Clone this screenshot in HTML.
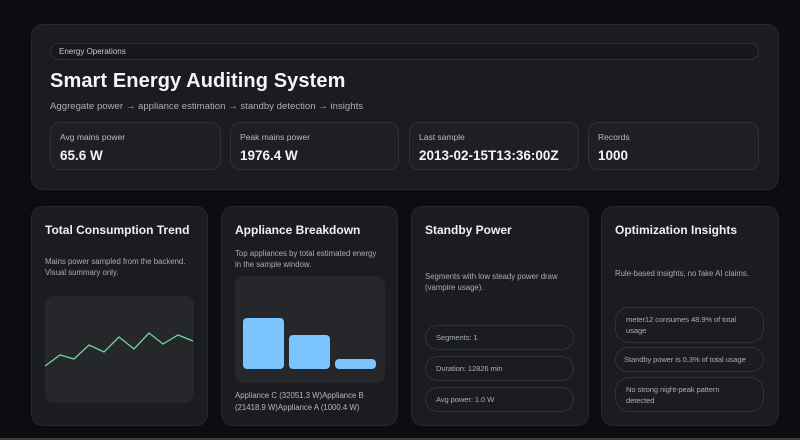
<!DOCTYPE html><html><head><style>
*{box-sizing:border-box;margin:0;padding:0}
body{width:800px;height:440px;background:#0b0d11;font-family:"Liberation Sans",sans-serif;color:#e8eaee;position:relative;overflow:hidden}
.a{position:absolute}
.card{position:absolute;background:#1b1c20;border:1px solid #26282d;border-radius:12px}
.stat{position:absolute;top:122px;height:48px;background:#1d1f23;border:1px solid #303237;border-radius:10px;padding:9px 9px}
.stat .l{font-size:8.5px;color:#b8bcc4}
.stat .v{font-size:13.5px;font-weight:bold;margin-top:6px;color:#f2f3f5}
h3{position:absolute;font-size:12px;font-weight:bold;color:#eef0f3}
.t{position:absolute;font-size:7.8px;color:#a8adb5;line-height:11px}
.pill{position:absolute;border:1px solid #303237;border-radius:14px;font-size:7.6px;letter-spacing:-0.1px;color:#a8adb5;padding:0 10px;display:flex;align-items:center;line-height:11px;white-space:nowrap}
</style></head><body>
<div class="card" style="left:31px;top:24px;width:748px;height:166px"></div>
<div class="a" style="left:50px;top:43px;width:709px;height:17px;border:1px solid #2e3035;border-radius:9px;background:#17181c;font-size:8px;color:#c6c9cf;padding:3px 8px">Energy Operations</div>
<div class="a" style="left:50px;top:70px;font-size:20px;font-weight:bold;color:#f4f5f7;letter-spacing:0.1px">Smart Energy Auditing System</div>
<div class="a" style="left:50px;top:101px;font-size:9.6px;color:#a9adb5">Aggregate power → appliance estimation → standby detection → insights</div>
<div class="stat" style="left:50px;width:171px"><div class="l">Avg mains power</div><div class="v">65.6 W</div></div>
<div class="stat" style="left:230px;width:169px"><div class="l">Peak mains power</div><div class="v">1976.4 W</div></div>
<div class="stat" style="left:409px;width:170px"><div class="l">Last sample</div><div class="v">2013-02-15T13:36:00Z</div></div>
<div class="stat" style="left:588px;width:171px"><div class="l">Records</div><div class="v">1000</div></div>

<div class="card" style="left:31px;top:206px;width:177px;height:220px"></div>
<h3 style="left:45px;top:223px">Total Consumption Trend</h3>
<div class="t" style="left:45px;top:256px">Mains power sampled from the backend.<br>Visual summary only.</div>
<div class="a" style="left:45px;top:296px;width:149px;height:107px;background:#25272b;border-radius:9px"></div>
<svg class="a" style="left:0;top:0" width="800" height="440"><polyline fill="none" stroke="#6fd6a0" stroke-width="1.3" points="45,366 60,355 74,359 89,345 104,352 119,337 134,349 149,333 163,344 178,335 193,341"/></svg>

<div class="card" style="left:221px;top:206px;width:177px;height:220px"></div>
<h3 style="left:235px;top:223px">Appliance Breakdown</h3>
<div class="t" style="left:235px;top:248px">Top appliances by total estimated energy<br>in the sample window.</div>
<div class="a" style="left:235px;top:276px;width:150px;height:107px;background:#25272b;border-radius:9px"></div>
<div class="a" style="left:243px;top:318px;width:41px;height:51px;background:#7cc4ff;border-radius:4px"></div>
<div class="a" style="left:289px;top:335px;width:41px;height:34px;background:#7cc4ff;border-radius:4px"></div>
<div class="a" style="left:335px;top:359px;width:41px;height:10px;background:#7cc4ff;border-radius:4px"></div>
<div class="t" style="left:235px;top:390px;line-height:12px;color:#b4b8bf">Appliance C (32051.3 W)Appliance B<br>(21418.9 W)Appliance A (1000.4 W)</div>

<div class="card" style="left:411px;top:206px;width:178px;height:220px"></div>
<h3 style="left:425px;top:223px">Standby Power</h3>
<div class="t" style="left:425px;top:271px">Segments with low steady power draw<br>(vampire usage).</div>
<div class="pill" style="left:425px;top:325px;width:149px;height:25px">Segments: 1</div>
<div class="pill" style="left:425px;top:356px;width:149px;height:25px">Duration: 12826 min</div>
<div class="pill" style="left:425px;top:387px;width:149px;height:25px">Avg power: 1.0 W</div>

<div class="card" style="left:601px;top:206px;width:178px;height:220px"></div>
<h3 style="left:615px;top:223px">Optimization Insights</h3>
<div class="t" style="left:615px;top:268px">Rule-based insights, no fake AI claims.</div>
<div class="pill" style="left:615px;top:307px;width:149px;height:36px">meter12 consumes 48.9% of total<br>usage</div>
<div class="pill" style="left:615px;top:347px;width:149px;height:25px;padding:0 8px">Standby power is 0.3% of total usage</div>
<div class="pill" style="left:615px;top:377px;width:149px;height:35px">No strong night-peak pattern<br>detected</div>
<div class="a" style="left:0;top:438px;width:800px;height:2px;background:#3a3c40"></div>
</body></html>
